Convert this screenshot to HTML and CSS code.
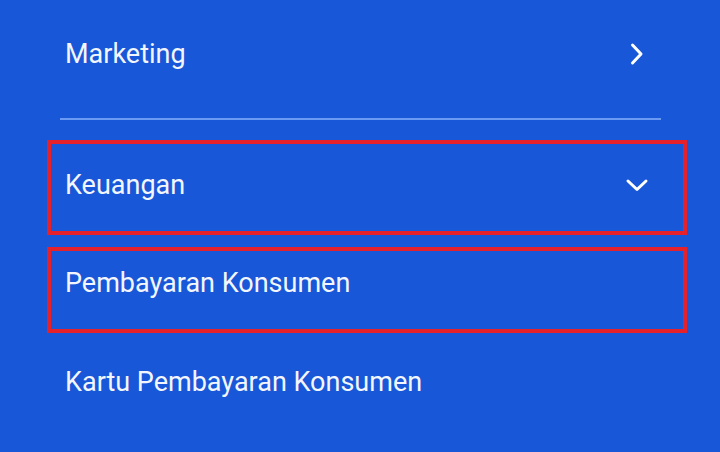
FILE: index.html
```html
<!DOCTYPE html>
<html lang="id">
<head>
<meta charset="utf-8">
<title>Menu</title>
<link rel="stylesheet" href="styles.css">
</head>
<body>
<div class="menu">
  <div class="row row-top">
    <span class="label">Marketing</span>
    <svg class="chev" width="24" height="24" viewBox="0 0 24 24" aria-hidden="true"><polyline points="7.5,3 16,12 7.5,21" fill="none" stroke="#ffffff" stroke-width="3" stroke-linecap="round" stroke-linejoin="round"/></svg>
  </div>
  <div class="divider"></div>
  <div class="row boxed box-one">
    <span class="label">Keuangan</span>
    <svg class="chev" width="24" height="24" viewBox="0 0 24 24" aria-hidden="true"><polyline points="3,8 12,16.5 21,8" fill="none" stroke="#ffffff" stroke-width="3" stroke-linecap="round" stroke-linejoin="round"/></svg>
  </div>
  <div class="row boxed box-two">
    <span class="label">Pembayaran Konsumen</span>
  </div>
  <div class="row row-last">
    <span class="label">Kartu Pembayaran Konsumen</span>
  </div>
</div>
</body>
</html>
```
FILE: styles.css
```css
html, body {
  margin: 0;
  padding: 0;
}
body {
  background: #1857d8;
  width: 720px;
  height: 452px;
  overflow: hidden;
  font-family: Roboto, "Liberation Sans", sans-serif;
}
.menu {
  padding: 0 33px 0 47px;
  display: flex;
  flex-direction: column;
}
.row {
  display: flex;
  align-items: center;
  justify-content: space-between;
  box-sizing: border-box;
  padding-left: 18px;
  padding-right: 38px;
}
.label {
  font-size: 27px;
  line-height: 32px;
  color: #f3f6ff;
}
.chev {
  display: block;
  flex: none;
}
.row-top {
  height: 118px;
  padding-top: 38px;
  padding-bottom: 48px;
  align-items: flex-start;
}
.row-top .chev {
  margin-top: 4px;
}
.divider {
  height: 2px;
  background: #6a9af4;
  margin: 0 26px 0 13px;
}
.boxed {
  border: 4px solid #e5222c;
  padding-left: 14px;
  padding-right: 34px;
}
.box-one {
  margin-top: 20px;
  height: 95px;
  padding-top: 25px;
  padding-bottom: 30px;
}
.box-two {
  margin-top: 12px;
  height: 86px;
  padding-top: 16px;
  padding-bottom: 30px;
}
.row-last {
  margin-top: 33px;
}
```
